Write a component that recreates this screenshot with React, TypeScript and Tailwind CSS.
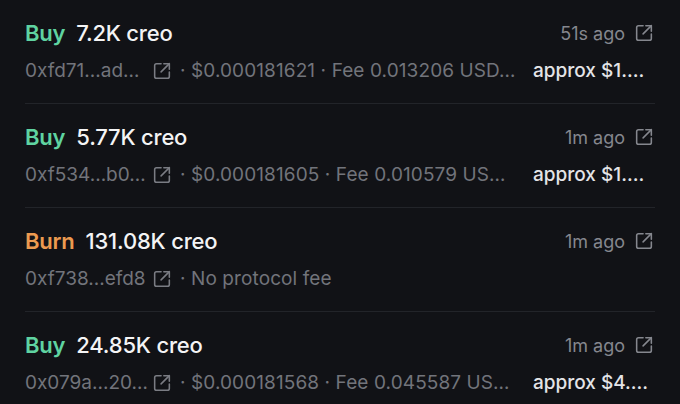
import React from "react";

const ExtIcon = ({ className = "", size = 22 }: { className?: string; size?: number }) => (
  <svg
    viewBox="0 0 24 24"
    width={size}
    height={size}
    fill="none"
    stroke="currentColor"
    strokeWidth="1.7"
    strokeLinecap="round"
    strokeLinejoin="round"
    className={className}
  >
    <path d="M20 13v5a2 2 0 0 1-2 2H6a2 2 0 0 1-2-2V6a2 2 0 0 1 2-2h5" />
    <path d="M14 4h6v6" />
    <path d="M11 13 20 4" />
  </svg>
);

type Row = {
  kind: "Buy" | "Burn";
  amount: string;
  time: string;
  addr: string;
  mid: string;
  approx?: string;
};

const rows: Row[] = [
  {
    kind: "Buy",
    amount: "7.2K creo",
    time: "51s ago",
    addr: "0xfd71...ad…",
    mid: "· $0.000181621 · Fee 0.013206 USD…",
    approx: "approx $1.…",
  },
  {
    kind: "Buy",
    amount: "5.77K creo",
    time: "1m ago",
    addr: "0xf534...b0…",
    mid: "· $0.000181605 · Fee 0.010579 US…",
    approx: "approx $1.…",
  },
  {
    kind: "Burn",
    amount: "131.08K creo",
    time: "1m ago",
    addr: "0xf738...efd8",
    mid: "· No protocol fee",
  },
  {
    kind: "Buy",
    amount: "24.85K creo",
    time: "1m ago",
    addr: "0x079a...20…",
    mid: "· $0.000181568 · Fee 0.045587 US…",
    approx: "approx $4.…",
  },
];

export default function App() {
  return (
    <div
      className="w-[680px] h-[404px] overflow-hidden bg-[#111216] px-[25px]"
      style={{ fontFamily: "Inter, 'Liberation Sans', sans-serif" }}
    >
      {rows.map((r, i) => (
        <div
          key={i}
          className={`flex flex-col pt-[19px] pb-[19px] ${
            i < rows.length - 1 ? "border-b border-[#222429]" : ""
          }`}
        >
          <div className="flex items-center justify-between h-[28px]">
            <div className="flex items-center gap-[11px] text-[22px] tracking-[-0.2px]">
              <span
                className={`font-semibold ${
                  r.kind === "Buy" ? "text-[#5fd3a1]" : "text-[#ec9a50]"
                }`}
              >
                {r.kind}
              </span>
              <span className="font-medium text-[#f4f4f5]">{r.amount}</span>
            </div>
            <div className="flex items-center gap-[8px] text-[18px] text-[#85878e]">
              <span>{r.time}</span>
              <ExtIcon className="text-[#85878e]" />
            </div>
          </div>
          <div className="mt-[11px] flex items-center h-[26px] text-[19px] text-[#72747b] whitespace-nowrap">
            <span className="w-[126px] shrink-0">{r.addr}</span>
            <ExtIcon className="shrink-0 text-[#7a7c83]" />
            <span className="ml-[7px] shrink-0 tracking-[0.1px]">{r.mid}</span>
            {r.approx && (
              <span className="ml-auto w-[114px] shrink-0 mr-[8px] text-[#e4e4e7] font-medium">
                {r.approx}
              </span>
            )}
          </div>
        </div>
      ))}
    </div>
  );
}
